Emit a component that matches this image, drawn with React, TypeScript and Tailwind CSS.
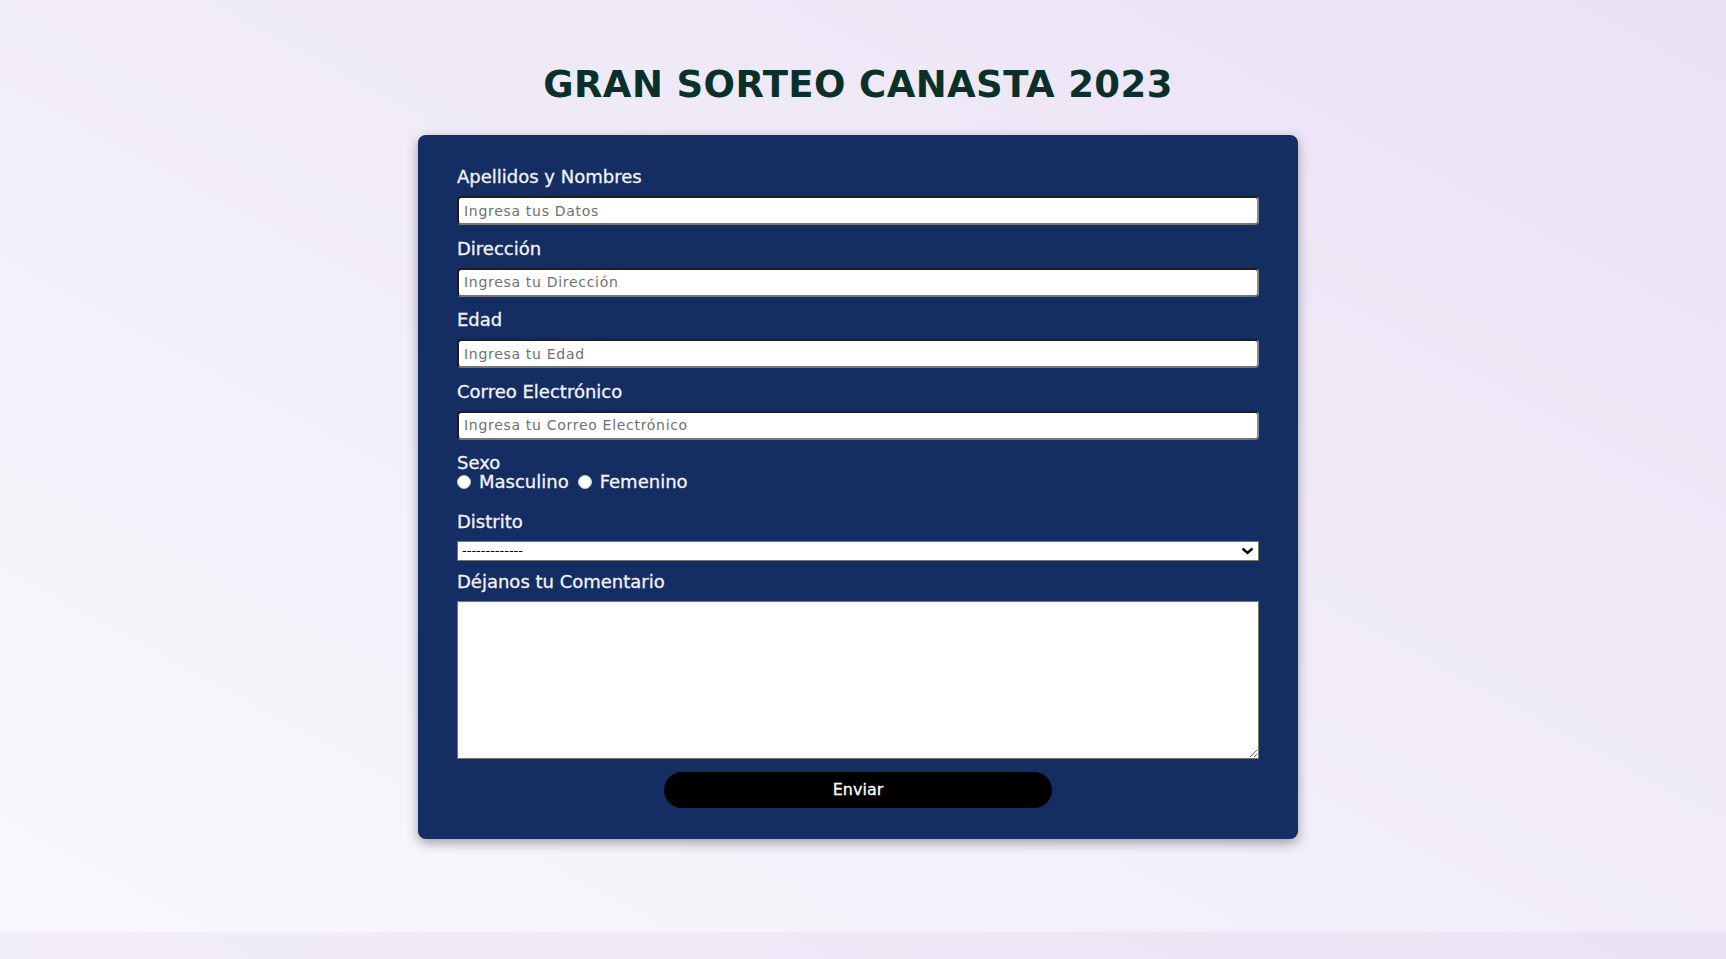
import React, { useState } from 'react';

const fields = [
  { label: 'Apellidos y Nombres', placeholder: 'Ingresa tus Datos', type: 'text' },
  { label: 'Dirección', placeholder: 'Ingresa tu Dirección', type: 'text' },
  { label: 'Edad', placeholder: 'Ingresa tu Edad', type: 'number' },
  { label: 'Correo Electrónico', placeholder: 'Ingresa tu Correo Electrónico', type: 'email' },
];

const App: React.FC = () => {
  const [sexo, setSexo] = useState('');

  return (
    <div className="min-h-screen bg-[linear-gradient(to_top_right,#f8f9fc,#ebe1f5)] bg-[length:100%_932px] font-['DejaVu_Sans',Verdana,sans-serif]">
      <div className="flex flex-col items-center pt-[63px] pr-[10px]">
        <h1 className="text-[37px] font-bold leading-[43px] tracking-[0.4px] text-[#0a3129]">GRAN SORTEO CANASTA 2023</h1>

        <form
          onSubmit={(e) => e.preventDefault()}
          className="mt-[29px] w-[880px] rounded-[8px] bg-[#142d63] px-[39px] pt-[31px] pb-[31px] text-[18px] leading-[21px] text-[#f4f4f8] shadow-[0_4px_12px_rgba(0,0,0,0.35)] [-webkit-text-stroke:0.3px_currentColor]"
        >
          {fields.map((f, i) => (
            <div key={f.label} className={i > 0 ? 'mt-[12.5px]' : ''}>
              <label className="mb-[9px] block">{f.label}</label>
              <input
                type={f.type}
                placeholder={f.placeholder}
                className="block h-[29px] w-full rounded-[4px] border-2 border-t-[#1e1e1e] border-l-[#1e1e1e] border-b-[#767676] border-r-[#8a8a8a] bg-white px-[5px] text-[14px] tracking-[0.7px] text-black outline-none [-webkit-text-stroke:0] placeholder:text-[#707070]"
              />
            </div>
          ))}

          <div className="mt-[13px]">
            <label className="block leading-[19px]">Sexo</label>
            <div className="flex h-[20px] items-center">
              <input
                type="radio"
                name="sexo"
                checked={sexo === 'M'}
                onChange={() => setSexo('M')}
                className="h-[14px] w-[14px] appearance-none rounded-full border border-[#c8c8c8] bg-white checked:border-[4px] checked:border-[#1a73e8]"
              />
              <span className="ml-[8px]">Masculino</span>
              <input
                type="radio"
                name="sexo"
                checked={sexo === 'F'}
                onChange={() => setSexo('F')}
                className="ml-[9px] h-[14px] w-[14px] appearance-none rounded-full border border-[#c8c8c8] bg-white checked:border-[4px] checked:border-[#1a73e8]"
              />
              <span className="ml-[8px]">Femenino</span>
            </div>
          </div>

          <div className="mt-[19px]">
            <label className="mb-[9px] block">Distrito</label>
            <div className="relative">
              <select className="block h-[20px] w-full appearance-none border border-[#767676] bg-white pl-[4px] text-[13px] leading-[18px] text-black outline-none [-webkit-text-stroke:0]">
                <option>-------------</option>
                <option>Lima</option>
                <option>Miraflores</option>
                <option>San Isidro</option>
              </select>
              <svg
                className="pointer-events-none absolute right-[5px] top-[6px] h-[8px] w-[13px]"
                viewBox="0 0 13 8"
                fill="none"
                stroke="#000"
                strokeWidth="2.4"
              >
                <path d="M1.5 1.5 L6.5 6 L11.5 1.5" />
              </svg>
            </div>
          </div>

          <div className="mt-[10px]">
            <label className="mb-[9px] block">Déjanos tu Comentario</label>
            <textarea className="block h-[158px] w-full resize border border-[#767676] bg-white text-[14px] text-black outline-none [-webkit-text-stroke:0]" />
          </div>

          <div className="mt-[13px] flex justify-center">
            <button
              type="submit"
              className="h-[36px] w-[388px] rounded-full bg-black text-[16px] text-white"
            >
              Enviar
            </button>
          </div>
        </form>
      </div>
    </div>
  );
};

export default App;
